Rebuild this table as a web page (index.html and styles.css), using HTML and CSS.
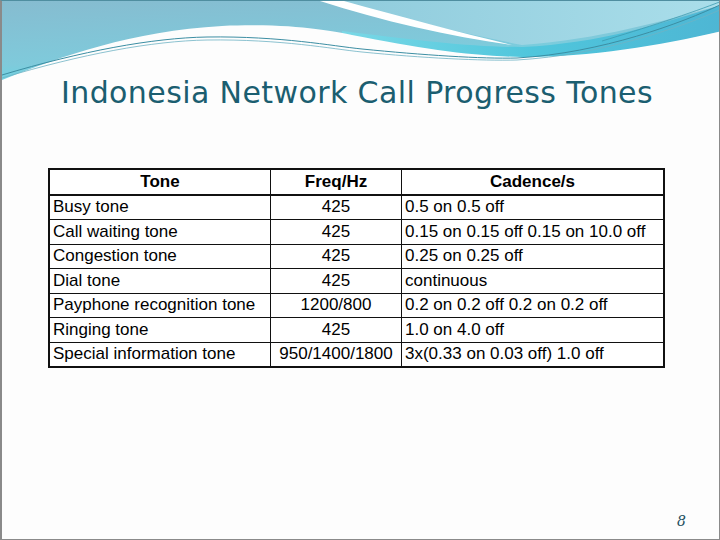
FILE: index.html
```html
<!DOCTYPE html>
<html>
<head>
<meta charset="utf-8">
<link rel="stylesheet" href="styles.css">
</head>
<body>
<div class="slide">
  <svg class="deco" width="720" height="95" viewBox="0 0 720 95" xmlns="http://www.w3.org/2000/svg">
    <defs>
      <linearGradient id="gTop" x1="0" y1="0" x2="0.35" y2="1">
        <stop offset="0" stop-color="#86bcd0"/>
        <stop offset="0.6" stop-color="#7fcadb"/>
        <stop offset="1" stop-color="#55e0ec"/>
      </linearGradient>
      <linearGradient id="gRight" x1="0" y1="0" x2="1" y2="0">
        <stop offset="0" stop-color="#8fcbdc"/>
        <stop offset="1" stop-color="#aadeea"/>
      </linearGradient>
      <linearGradient id="gBand" x1="0" y1="0" x2="1" y2="0">
        <stop offset="0" stop-color="#7ad8e6"/>
        <stop offset="0.5" stop-color="#4fc6dc"/>
        <stop offset="1" stop-color="#4eb6d4"/>
      </linearGradient>
    </defs>
    <rect x="0" y="0" width="720" height="95" fill="url(#gTop)"/>
    <path d="M330,0 L720,0 L720,4 C660,20 600,38 520,44 C450,30 390,15 330,0 Z" fill="url(#gRight)"/>
    <path d="M318,0 L342,0 C400,16 460,32 510,44 C450,36 380,20 318,0 Z" fill="#ffffff"/>
    <path d="M340,30 C420,40 470,46 520,46 C600,42 660,22 720,4 L720,30 C650,48 590,56 520,56 C450,56 400,48 340,36 Z" fill="url(#gBand)"/>
    <path d="M0,79 C60,55 130,30 220,25 C290,22 330,30 350,34 C420,48 470,55 520,56 C590,56 660,44 720,30 L720,95 L0,95 Z" fill="#fdfdfd"/>
    <path d="M0,74 C80,50 150,37 205,36 C280,35 330,45 360,48 C420,54 480,58 515,57 C600,52 680,22 720,3" fill="none" stroke="#3c8ea3" stroke-width="1"/>
    <path d="M0,77 C80,53 150,40 205,39 C280,38 330,48 360,51 C420,57 480,60 515,59 C600,54 680,26 720,8" fill="none" stroke="#6fb3c4" stroke-width="0.8"/>
    <path d="M600,40 C640,28 690,12 720,0" fill="none" stroke="#3c9ab0" stroke-width="0.8"/>
  </svg>

  <h1 class="title">Indonesia Network Call Progress Tones</h1>

  <table class="tones">
    <thead>
      <tr><th class="c1">Tone</th><th class="c2">Freq/Hz</th><th class="c3">Cadence/s</th></tr>
    </thead>
    <tbody>
      <tr><td>Busy tone</td><td class="num">425</td><td>0.5 on 0.5 off</td></tr>
      <tr><td>Call waiting tone</td><td class="num">425</td><td>0.15 on 0.15 off 0.15 on 10.0 off</td></tr>
      <tr><td>Congestion tone</td><td class="num">425</td><td>0.25 on 0.25 off</td></tr>
      <tr><td>Dial tone</td><td class="num">425</td><td>continuous</td></tr>
      <tr><td>Payphone recognition tone</td><td class="num">1200/800</td><td>0.2 on 0.2 off 0.2 on 0.2 off</td></tr>
      <tr><td>Ringing tone</td><td class="num">425</td><td>1.0 on 4.0 off</td></tr>
      <tr><td>Special information tone</td><td class="num">950/1400/1800</td><td>3x(0.33 on 0.03 off) 1.0 off</td></tr>
    </tbody>
  </table>

  <div class="footer"><span class="pagenum">8</span></div>
</div>
</body>
</html>
```

FILE: styles.css
```css
html, body {
  margin: 0;
  padding: 0;
  background: #ffffff;
}

.slide {
  position: relative;
  width: 720px;
  height: 540px;
  box-sizing: border-box;
  border: 1px solid #8a8a8a;
  border-left: 2px solid #8a8a8a;
  border-top: 1px solid #4f8ea0;
  background: #fdfdfd;
  display: flex;
  flex-direction: column;
  overflow: hidden;
}

.deco {
  position: absolute;
  top: 0;
  left: 0;
}

.title {
  position: relative;
  margin: 74px 0 0 0;
  padding-left: 59px;
  font-family: "DejaVu Sans", Verdana, sans-serif;
  font-weight: normal;
  font-size: 30px;
  letter-spacing: 0.4px;
  line-height: 36px;
  color: #1b5e70;
  white-space: nowrap;
}

.tones {
  margin: 57px 0 0 46px;
  width: 617px;
  border-collapse: collapse;
  border: 2px solid #111;
  background: #ffffff;
  font-family: "Liberation Sans", Arial, sans-serif;
  font-size: 17px;
  color: #000;
}

.tones th,
.tones td {
  border: 1px solid #111;
  height: 23.5px;
  padding: 0 3px;
  line-height: 18px;
  white-space: nowrap;
}

.tones th {
  font-weight: bold;
  text-align: center;
  border-bottom: 2px solid #111;
}

.tones .c1 { width: 214px; }
.tones .c2 { width: 124px; }

.tones .num {
  text-align: center;
}

.footer {
  margin-top: auto;
  display: flex;
  justify-content: flex-end;
  padding: 0 33px 10px 0;
}

.pagenum {
  font-family: "DejaVu Serif", Georgia, serif;
  font-style: italic;
  font-size: 14px;
  color: #1f4f60;
}
```
